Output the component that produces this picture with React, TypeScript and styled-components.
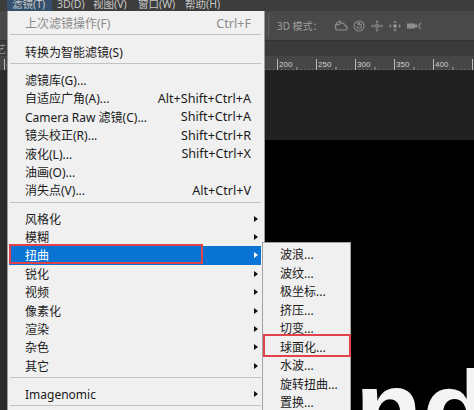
import React from "react";
import styled, { createGlobalStyle } from "styled-components";

const Global = createGlobalStyle`
  html, body { margin: 0; padding: 0; background: #1f1f1f; }
  body { font-family: "Noto Sans", "Noto Sans CJK SC", sans-serif; }
`;

const Screen = styled.div`
  position: relative;
  width: 474px;
  height: 410px;
  overflow: hidden;
  display: flex;
  flex-direction: column;
  background: #212121;
  font-family: "Noto Sans", "Noto Sans CJK SC", sans-serif;
`;

const MenuBar = styled.div`
  flex: none;
  height: 11px;
  display: flex;
  padding-left: 7px;
  background: #3d3d3d;
  overflow: hidden;
`;

const BarItem = styled.div<{ $w: number; $active?: boolean }>`
  width: ${(p) => p.$w}px;
  height: 11px;
  box-sizing: border-box;
  padding-left: 5px;
  font-size: 10.5px;
  line-height: 8px;
  color: #c6c6c6;
  white-space: nowrap;
  background: ${(p) => (p.$active ? "#34506c" : "transparent")};
`;

const OptionsBar = styled.div`
  flex: none;
  height: 30px;
  box-sizing: border-box;
  display: flex;
  align-items: center;
  padding-left: 268px;
  background: #494949;
  border-bottom: 1px solid #333333;
`;

const Divider = styled.div`
  width: 1px;
  height: 24px;
  background: #5f5f5f;
  margin-right: 8px;
`;

const ModeLabel = styled.span`
  font-size: 10px;
  color: #9e9e9e;
  margin-right: 11px;
  white-space: nowrap;
`;

const IconRow = styled.div`
  display: flex;
  align-items: center;
  gap: 4px;
`;

const TabRow = styled.div`
  flex: none;
  height: 15px;
  background: #3a3a3a;
  display: flex;
  align-items: center;
  font-size: 10px;
  color: #9a9a9a;
  overflow: hidden;
  white-space: nowrap;
`;

const TabLabel = styled.span`
  margin-left: -4px;
`;

const RulerBar = styled.div`
  flex: none;
  height: 14px;
  background: #464646;
`;

const Workspace = styled.div`
  flex: 1;
  display: flex;
`;

const LeftStrip = styled.div`
  width: 7px;
  background: #2a2a2a;
`;

const Pasteboard = styled.div`
  flex: 1;
  display: flex;
  flex-direction: column;
`;

const PasteGap = styled.div`
  height: 70px;
  background: #212121;
`;

const Canvas = styled.div`
  flex: 1;
  position: relative;
  overflow: hidden;
  background: #000000;
`;

const BigText = styled.span`
  position: absolute;
  left: 348px;
  top: 214px;
  font-family: "Liberation Sans", Arial, sans-serif;
  font-weight: 700;
  font-size: 110px;
  line-height: 1;
  color: #f4f4f4;
  white-space: nowrap;
`;

const Menu = styled.div`
  position: absolute;
  left: 7px;
  top: 11px;
  width: 258px;
  box-sizing: border-box;
  padding: 3px 3px 4px 1px;
  background: #f0f0f0;
  border-left: 1px solid #9a9a9a;
  border-right: 1px solid #9a9a9a;
  border-bottom: 1px solid #9a9a9a;
`;

const Row = styled.div<{ $active?: boolean; $disabled?: boolean; $h?: number }>`
  display: grid;
  grid-template-columns: 1fr auto 10px;
  align-items: center;
  height: ${(p) => p.$h ?? 18.4}px;
  padding-left: 16px;
  font-size: 12px;
  white-space: nowrap;
  color: ${(p) => (p.$active ? "#ffffff" : p.$disabled ? "#8c8c8c" : "#1a1a1a")};
  background: ${(p) => (p.$active ? "#0a74d4" : "transparent")};
`;

const Shortcut = styled.span`
  text-align: right;
  font-size: 12.6px;
`;

const Arrow = styled.span<{ $light?: boolean }>`
  width: 0;
  height: 0;
  margin-left: 3px;
  border-left: 4px solid ${(p) => (p.$light ? "#ffffff" : "#111111")};
  border-top: 3.5px solid transparent;
  border-bottom: 3.5px solid transparent;
`;

const Separator = styled.div`
  height: 1px;
  margin: 2px 0 7px 1px;
  background: #c3c3c3;
`;

const Submenu = styled.div`
  position: absolute;
  left: 262px;
  top: 242px;
  width: 89px;
  box-sizing: border-box;
  padding: 2px 1px;
  background: #f0f0f0;
  border: 1px solid #a3a3a3;
`;

const Highlight = styled.div<{ $l: number; $t: number; $w: number; $h: number }>`
  position: absolute;
  left: ${(p) => p.$l}px;
  top: ${(p) => p.$t}px;
  width: ${(p) => p.$w}px;
  height: ${(p) => p.$h}px;
  box-sizing: border-box;
  border: 2px solid #e2434b;
  pointer-events: none;
`;

type Item =
  | { sep: true }
  | { label: string; shortcut?: string; sub?: boolean; disabled?: boolean; active?: boolean };

const items: Item[] = [
  { label: "上次滤镜操作(F)", shortcut: "Ctrl+F", disabled: true },
  { sep: true },
  { label: "转换为智能滤镜(S)" },
  { sep: true },
  { label: "滤镜库(G)..." },
  { label: "自适应广角(A)...", shortcut: "Alt+Shift+Ctrl+A" },
  { label: "Camera Raw 滤镜(C)...", shortcut: "Shift+Ctrl+A" },
  { label: "镜头校正(R)...", shortcut: "Shift+Ctrl+R" },
  { label: "液化(L)...", shortcut: "Shift+Ctrl+X" },
  { label: "油画(O)..." },
  { label: "消失点(V)...", shortcut: "Alt+Ctrl+V" },
  { sep: true },
  { label: "风格化", sub: true },
  { label: "模糊", sub: true },
  { label: "扭曲", sub: true, active: true },
  { label: "锐化", sub: true },
  { label: "视频", sub: true },
  { label: "像素化", sub: true },
  { label: "渲染", sub: true },
  { label: "杂色", sub: true },
  { label: "其它", sub: true },
  { sep: true },
  { label: "Imagenomic", sub: true },
  { sep: true },
];

const subItems = [
  "波浪...",
  "波纹...",
  "极坐标...",
  "挤压...",
  "切变...",
  "球面化...",
  "水波...",
  "旋转扭曲...",
  "置换...",
];

const barItems = [
  { label: "滤镜(T)", w: 45, active: true },
  { label: "3D(D)", w: 36 },
  { label: "视图(V)", w: 45 },
  { label: "窗口(W)", w: 47 },
  { label: "帮助(H)", w: 45 },
];

const ic = "#8f8f8f";

const IconRotate = () => (
  <svg width="14" height="12" viewBox="0 0 14 12" fill="none" stroke={ic} strokeWidth="1.1">
    <path d="M3.2 10 H10.8 A2.2 2.2 0 0 0 11 5.6 A3 3 0 0 0 5.4 4.6 A2.7 2.7 0 0 0 3.2 10 Z" />
    <path d="M1.5 6 A4.5 4.5 0 0 1 6.5 1.6" />
    <path d="M5.2 0.8 L6.8 1.6 L5.6 2.9" />
  </svg>
);

const IconRoll = () => (
  <svg width="14" height="12" viewBox="0 0 14 12" fill="none" stroke={ic} strokeWidth="1.1">
    <circle cx="7" cy="6" r="5" />
    <path d="M4.8 6 A2.3 2.3 0 1 0 7 3.7" />
    <path d="M7 2.6 L7 4.8 L5.6 3.7 Z" fill={ic} />
  </svg>
);

const IconDrag = () => (
  <svg width="14" height="12" viewBox="0 0 14 12" fill="none" stroke={ic} strokeWidth="1">
    <path d="M7 0.8 V4.3 M7 7.7 V11.2 M1.5 6 H5.2 M8.8 6 H12.5" />
    <path d="M5.6 2.2 L7 0.8 L8.4 2.2 M5.6 9.8 L7 11.2 L8.4 9.8 M2.9 4.6 L1.5 6 L2.9 7.4 M11.1 4.6 L12.5 6 L11.1 7.4" />
    <rect x="5.8" y="4.8" width="2.4" height="2.4" />
  </svg>
);

const IconSlide = () => (
  <svg width="14" height="12" viewBox="0 0 14 12" fill={ic}>
    <path d="M7 0.5 L9 2.6 H5 Z M7 11.5 L9 9.4 H5 Z M1 6 L3.1 4 V8 Z M13 6 L10.9 4 V8 Z" />
    <path d="M7 3.6 L9.4 6 L7 8.4 L4.6 6 Z" />
  </svg>
);

const IconCamera = () => (
  <svg width="16" height="12" viewBox="0 0 16 12" fill="none">
    <rect x="1" y="3.5" width="8" height="5" fill={ic} />
    <path d="M9 5 L11 4 V8 L9 7 Z" fill={ic} />
    <path d="M15 2.8 L12.4 6 L15 9.2" stroke={ic} strokeWidth="1.1" />
  </svg>
);

const Ruler = () => {
  const majors: number[] = [];
  for (let k = -7; k <= 5; k++) majors.push(277 + 39 * k);
  const minors: { x: number; h: number }[] = [];
  majors.forEach((m) => {
    for (let i = 1; i < 10; i++) minors.push({ x: m + i * 3.9, h: i === 5 ? 5 : 2.5 });
  });
  return (
    <svg width="474" height="14" viewBox="0 0 474 14">
      {majors.map((x) => (
        <line key={"M" + x} x1={x + 0.5} y1="0" x2={x + 0.5} y2="14" stroke="#bdbdbd" strokeWidth="1" />
      ))}
      {minors.map((t, i) => (
        <line key={i} x1={t.x + 0.5} y1={14 - t.h - 1} x2={t.x + 0.5} y2="13" stroke="#a8a8a8" strokeWidth="1" />
      ))}
      {majors.map((x, k) => (
        <text key={"T" + x} x={x + 2} y="8" fontSize="8" fill="#d2d2d2" fontFamily="Liberation Sans, Arial, sans-serif">
          {200 + 50 * (k - 7)}
        </text>
      ))}
    </svg>
  );
};

export default function App() {
  return (
    <>
      <Global />
      <Screen>
        <MenuBar>
          {barItems.map((b) => (
            <BarItem key={b.label} $w={b.w} $active={b.active}>
              {b.label}
            </BarItem>
          ))}
        </MenuBar>
        <OptionsBar>
          <Divider />
          <ModeLabel>3D 模式：</ModeLabel>
          <IconRow>
            <IconRotate />
            <IconRoll />
            <IconDrag />
            <IconSlide />
            <IconCamera />
          </IconRow>
        </OptionsBar>
        <TabRow>
          <TabLabel>艺</TabLabel>
        </TabRow>
        <RulerBar>
          <Ruler />
        </RulerBar>
        <Workspace>
          <LeftStrip />
          <Pasteboard>
            <PasteGap />
            <Canvas>
              <BigText>nd</BigText>
            </Canvas>
          </Pasteboard>
        </Workspace>

        <Menu>
          {items.map((it, i) =>
            "sep" in it ? (
              <Separator key={i} />
            ) : (
              <Row key={i} $active={it.active} $disabled={it.disabled}>
                <span>{it.label}</span>
                <Shortcut>{it.shortcut ?? ""}</Shortcut>
                {it.sub ? <Arrow $light={it.active} /> : <span />}
              </Row>
            )
          )}
          <Highlight $l={1} $t={233} $w={194} $h={20} />
        </Menu>

        <Submenu>
          {subItems.map((s) => (
            <Row key={s} $h={18.5}>
              <span>{s}</span>
              <span />
              <span />
            </Row>
          ))}
          <Highlight $l={0} $t={91} $w={88} $h={23} />
        </Submenu>
      </Screen>
    </>
  );
}
